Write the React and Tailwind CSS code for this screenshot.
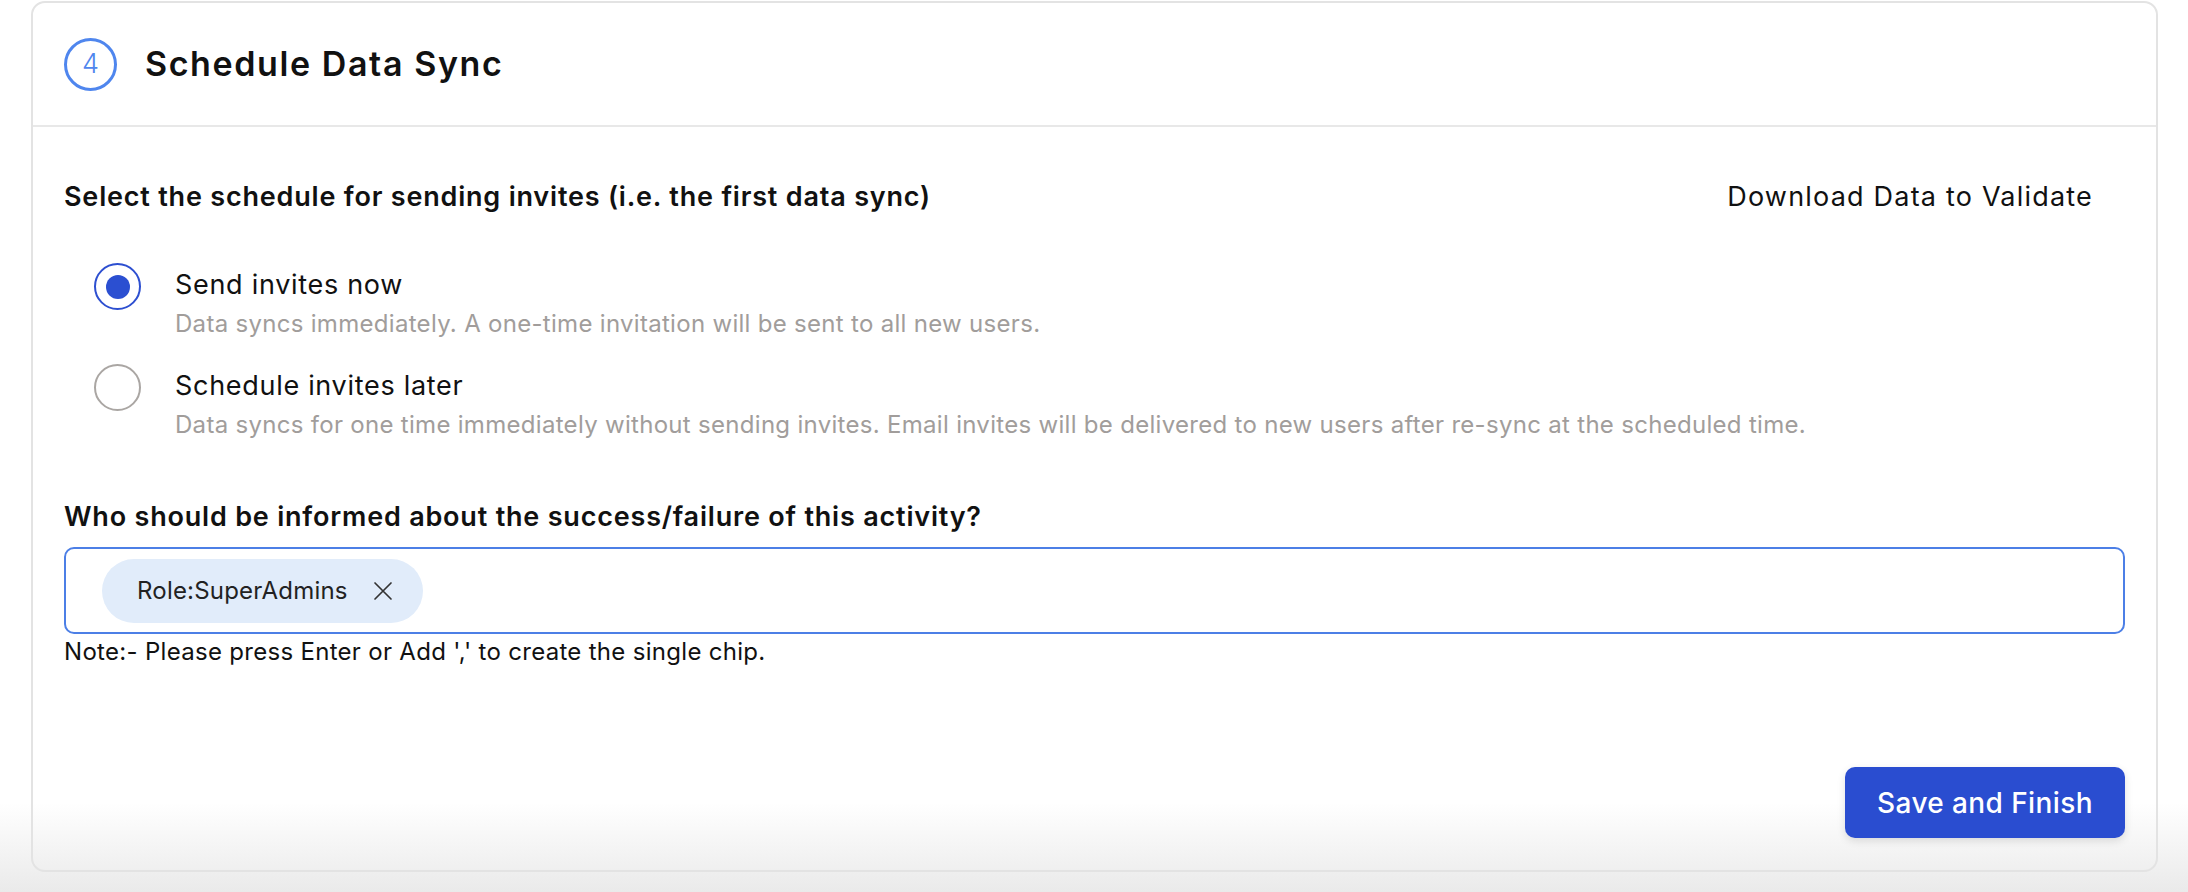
import { useState } from "react";

const options = [
  {
    id: "now",
    label: "Send invites now",
    hint: "Data syncs immediately. A one-time invitation will be sent to all new users."
  },
  {
    id: "later",
    label: "Schedule invites later",
    hint: "Data syncs for one time immediately without sending invites. Email invites will be delivered to new users after re-sync at the scheduled time."
  }
];

const Radio = ({ checked }) => (
  <span
    className={`flex h-[47px] w-[47px] shrink-0 items-center justify-center rounded-full border-2 ${
      checked ? "border-[#2d4fd0]" : "border-[#aaa6a3]"
    }`}
  >
    {checked ? <span className="h-[24px] w-[24px] rounded-full bg-[#2b4fd1]" /> : null}
  </span>
);

const App = () => {
  const [schedule, setSchedule] = useState("now");
  const [chips, setChips] = useState(["Role:SuperAdmins"]);

  return (
    <div className="min-h-[892px] w-full bg-[linear-gradient(to_bottom,#ffffff_0%,#ffffff_90%,#eaeaea_100%)] pl-[31px] pr-[30px] pt-[1px] font-['Inter',sans-serif] text-[#111]">
      <div className="rounded-[14px] border-2 border-[#e3e3e3]">
        <div className="flex h-[124px] items-center gap-7 border-b-2 border-[#e8e8e8] px-[31px]">
          <div className="flex h-[53px] w-[53px] items-center justify-center rounded-full border-[3px] border-[#4f86ee] text-[27px] font-light text-[#4f86ee]">
            4
          </div>
          <h1 className="text-[34px] font-semibold leading-[40px] tracking-[1.6px]">Schedule Data Sync</h1>
        </div>

        <div className="px-[31px] pb-[32px]">
          <div className="mt-[55px] flex items-center justify-between pr-[32px]">
            <p className="text-[27px] font-semibold leading-[30px] tracking-[0.8px]">
              Select the schedule for sending invites (i.e. the first data sync)
            </p>
            <button type="button" className="text-[27px] leading-[30px] tracking-[1.2px] text-[#111]">
              Download Data to Validate
            </button>
          </div>

          <div className="mt-[51px] flex flex-col gap-[26px] pl-[30px]">
            {options.map((option) => (
              <label
                key={option.id}
                className="flex cursor-pointer items-start gap-[34px]"
                onClick={() => setSchedule(option.id)}
              >
                <Radio checked={schedule === option.id} />
                <div className="pt-[6px]">
                  <p className="text-[27px] leading-[32px] tracking-[0.7px]">{option.label}</p>
                  <p className="mt-[9px] text-[24px] leading-[28px] tracking-[0.3px] text-[#a19d9b]">{option.hint}</p>
                </div>
              </label>
            ))}
          </div>

          <p className="mt-[63px] text-[27px] font-semibold leading-[30px] tracking-[0.8px]">
            Who should be informed about the success/failure of this activity?
          </p>

          <div className="mt-[15px] flex h-[87px] items-center gap-3 rounded-[10px] border-2 border-[#4c7fe6] px-[36px]">
            {chips.map((chip) => (
              <span
                key={chip}
                className="flex h-[64px] items-center gap-[25px] rounded-full bg-[#e1ecfa] pl-[35px] pr-[30px] text-[24px] tracking-[0.2px] text-[#222]"
              >
                {chip}
                <button
                  type="button"
                  onClick={() => setChips((prev) => prev.filter((c) => c !== chip))}
                  className="text-[#333]"
                >
                  <svg width="20" height="20" viewBox="0 0 20 20" fill="none" stroke="currentColor" strokeWidth="1.7" strokeLinecap="round">
                    <path d="M2 2L18 18M18 2L2 18" />
                  </svg>
                </button>
              </span>
            ))}
          </div>

          <p className="mt-[4px] text-[24px] leading-[28px] tracking-[0.3px] text-[#111]">
            Note:- Please press Enter or Add ',' to create the single chip.
          </p>

          <div className="mt-[101px] flex justify-end">
            <button
              type="button"
              className="h-[71px] w-[280px] rounded-[10px] bg-[#2a4dd0] text-[28px] font-medium tracking-[0.4px] text-white shadow-[0_3px_8px_rgba(0,0,0,0.12)]"
            >
              Save and Finish
            </button>
          </div>
        </div>
      </div>
    </div>
  );
};

export default App;
